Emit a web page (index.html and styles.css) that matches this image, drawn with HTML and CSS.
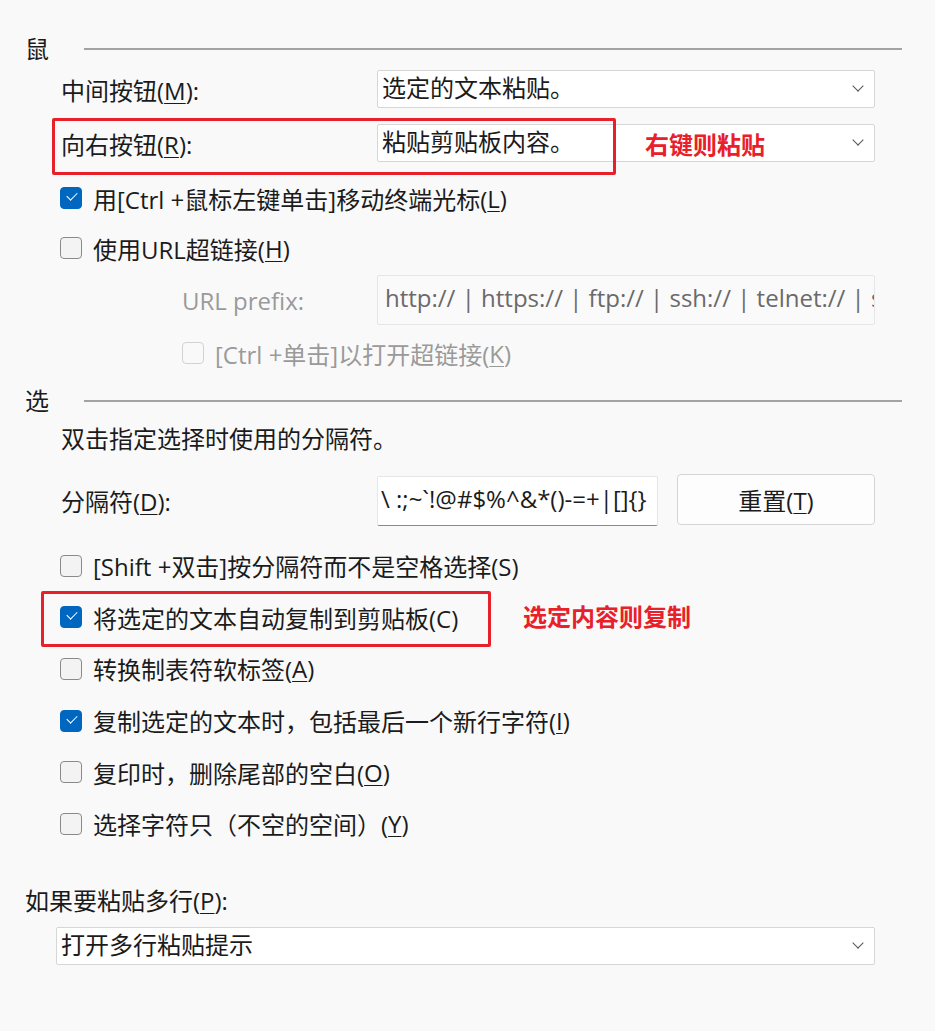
FILE: index.html
```html
<!DOCTYPE html>
<html lang="zh-CN">
<head>
    <meta charset="UTF-8">
    <title>鼠标设置</title>
    <link rel="stylesheet" href="styles.css">
</head>
<body>
    <div class="panel">
        <div class="group-head"><span class="group-title">鼠</span><span class="group-line"></span></div>

        <div class="field first">
            <div class="label">中间按钮(<u>M</u>):</div>
            <div class="select">选定的文本粘贴。<span class="chev"></span></div>
        </div>
        <div class="field second">
            <div class="label">向右按钮(<u>R</u>):</div>
            <div class="select">粘贴剪贴板内容。<span class="chev"></span></div>
            <div class="mark mark-right"></div>
            <div class="note note-right">右键则粘贴</div>
        </div>

        <div class="check-row after-fields"><span class="box on"></span>用[Ctrl +鼠标左键单击]移动终端光标(<u>L</u>)</div>
        <div class="check-row"><span class="box"></span>使用URL超链接(<u>H</u>)</div>

        <div class="field url">
            <div class="label sub muted">URL prefix:</div>
            <div class="text-input muted-input">http:// | https:// | ftp:// | ssh:// | telnet:// | sftp://</div>
        </div>
        <div class="check-row sub disabled"><span class="box"></span>[Ctrl +单击]以打开超链接(<u>K</u>)</div>

        <div class="group-head second-group"><span class="group-title">选</span><span class="group-line"></span></div>
        <div class="desc">双击指定选择时使用的分隔符。</div>

        <div class="field sep">
            <div class="label">分隔符(<u>D</u>):</div>
            <div class="text-input sep-input">\ :;~`!@#$%^&amp;*()-=+|[]{}</div>
            <button class="button">重置(<u>T</u>)</button>
        </div>

        <div class="checks">
            <div class="check-row"><span class="box"></span>[Shift +双击]按分隔符而不是空格选择(S)</div>
            <div class="check-row">
                <span class="box on"></span>将选定的文本自动复制到剪贴板(C)
                <div class="mark mark-copy"></div>
                <div class="note note-copy">选定内容则复制</div>
            </div>
            <div class="check-row"><span class="box"></span>转换制表符软标签(<u>A</u>)</div>
            <div class="check-row"><span class="box on"></span>复制选定的文本时，包括最后一个新行字符(<u>I</u>)</div>
            <div class="check-row"><span class="box"></span>复印时，删除尾部的空白(<u>O</u>)</div>
            <div class="check-row"><span class="box"></span>选择字符只（不空的空间）(<u>Y</u>)</div>
        </div>

        <div class="paste-label">如果要粘贴多行(<u>P</u>):</div>
        <div class="select wide">打开多行粘贴提示<span class="chev"></span></div>
    </div>
</body>
</html>
```

FILE: styles.css
```css
body {
    margin: 0;
    background-color: #f9f9f9;
    color: #1b1b1b;
    font-family: "Open Sans", "Noto Sans CJK SC", sans-serif;
    font-size: 24px;
}
u {
    text-decoration-thickness: 1px;
    text-underline-offset: 3px;
}
.panel {
    padding: 34px 0 40px 25px;
    width: 877px;
}
.group-head {
    display: flex;
    align-items: center;
    height: 30px;
}
.group-title {
    width: 59px;
    line-height: 30px;
}
.group-line {
    flex: 1;
    height: 2px;
    background-color: #a3a3a3;
}
.field {
    position: relative;
    display: flex;
    align-items: center;
    margin-left: 36px;
}
.field.first { margin-top: 6px; }
.field.second { margin-top: 16px; }
.label {
    width: 316px;
    flex-shrink: 0;
}
.label.sub {
    width: 195px;
    padding-left: 121px;
}
.muted { color: #9a9a9a; }
.select {
    position: relative;
    box-sizing: border-box;
    width: 498px;
    height: 38px;
    background-color: #fff;
    border: 1px solid #d6d6d6;
    border-radius: 2px;
    padding-left: 4px;
    line-height: 34px;
    white-space: nowrap;
}
.chev {
    position: absolute;
    right: 12px;
    top: 11px;
    width: 7px;
    height: 7px;
    border-right: 1px solid #555;
    border-bottom: 1px solid #555;
    transform: rotate(45deg);
}
.select.wide {
    width: 819px;
    margin: 11px 0 0 31px;
}
.text-input {
    box-sizing: border-box;
    height: 50px;
    border: 1px solid #e6e6e6;
    border-radius: 2px;
    padding-left: 7px;
    line-height: 44px;
    white-space: nowrap;
    overflow: hidden;
}
.muted-input {
    width: 498px;
    background-color: #fafafa;
    color: #6a6a6a;
}
.field.url {
    margin-top: 2px;
}
.field.sep {
    margin-top: 20px;
    height: 52px;
}
.sep-input {
    width: 281px;
    background-color: #fff;
    border-bottom-color: #8a8a8a;
    padding-left: 3px;
    margin-top: 2px;
}
.button {
    box-sizing: border-box;
    width: 198px;
    height: 51px;
    margin-left: 19px;
    margin-top: -2px;
    background-color: #fdfdfd;
    border: 1px solid #d5d5d5;
    border-radius: 4px;
    font-family: inherit;
    font-size: 24px;
    color: #1b1b1b;
}
.check-row {
    position: relative;
    display: flex;
    align-items: center;
    height: 50px;
    margin-left: 35px;
    white-space: nowrap;
}
.check-row.after-fields { margin-top: 11px; }
.check-row.sub {
    margin-left: 157px;
    margin-top: 3px;
}
.checks .check-row { height: 51.6px; }
.checks { margin-top: 14px; }
.box {
    box-sizing: border-box;
    width: 22px;
    height: 22px;
    margin-right: 11px;
    border: 1px solid #8a8a8a;
    border-radius: 4px;
    background-color: #f3f3f3;
    flex-shrink: 0;
    position: relative;
}
.box.on {
    background-color: #0067c0;
    border-color: #0067c0;
}
.box.on::after {
    content: "";
    position: absolute;
    left: 6px;
    top: 4px;
    width: 9px;
    height: 5px;
    border-left: 1.5px solid #fff;
    border-bottom: 1.5px solid #fff;
    transform: rotate(-45deg);
}
.disabled { color: #9a9a9a; }
.disabled .box {
    border-color: #d2d2d2;
    background-color: #f9f9f9;
}
.second-group { margin-top: 8px; }
.desc {
    margin: 8px 0 0 36px;
    height: 30px;
    line-height: 30px;
}
.paste-label {
    margin-top: 36px;
    height: 30px;
    line-height: 30px;
}

/* red annotations drawn over the screenshot */
.mark {
    position: absolute;
    border: 3px solid #e8202a;
    border-radius: 2px;
    pointer-events: none;
}
.mark-right {
    left: -9px;
    top: -6px;
    width: 558px;
    height: 51px;
}
.mark-copy {
    left: -19px;
    top: -1px;
    width: 444px;
    height: 50px;
}
.note {
    position: absolute;
    color: #e8202a;
    font-weight: bold;
    font-size: 24px;
}
.note-right {
    left: 584px;
    top: 2px;
}
.note-copy {
    left: 463px;
    top: 6px;
}
```
